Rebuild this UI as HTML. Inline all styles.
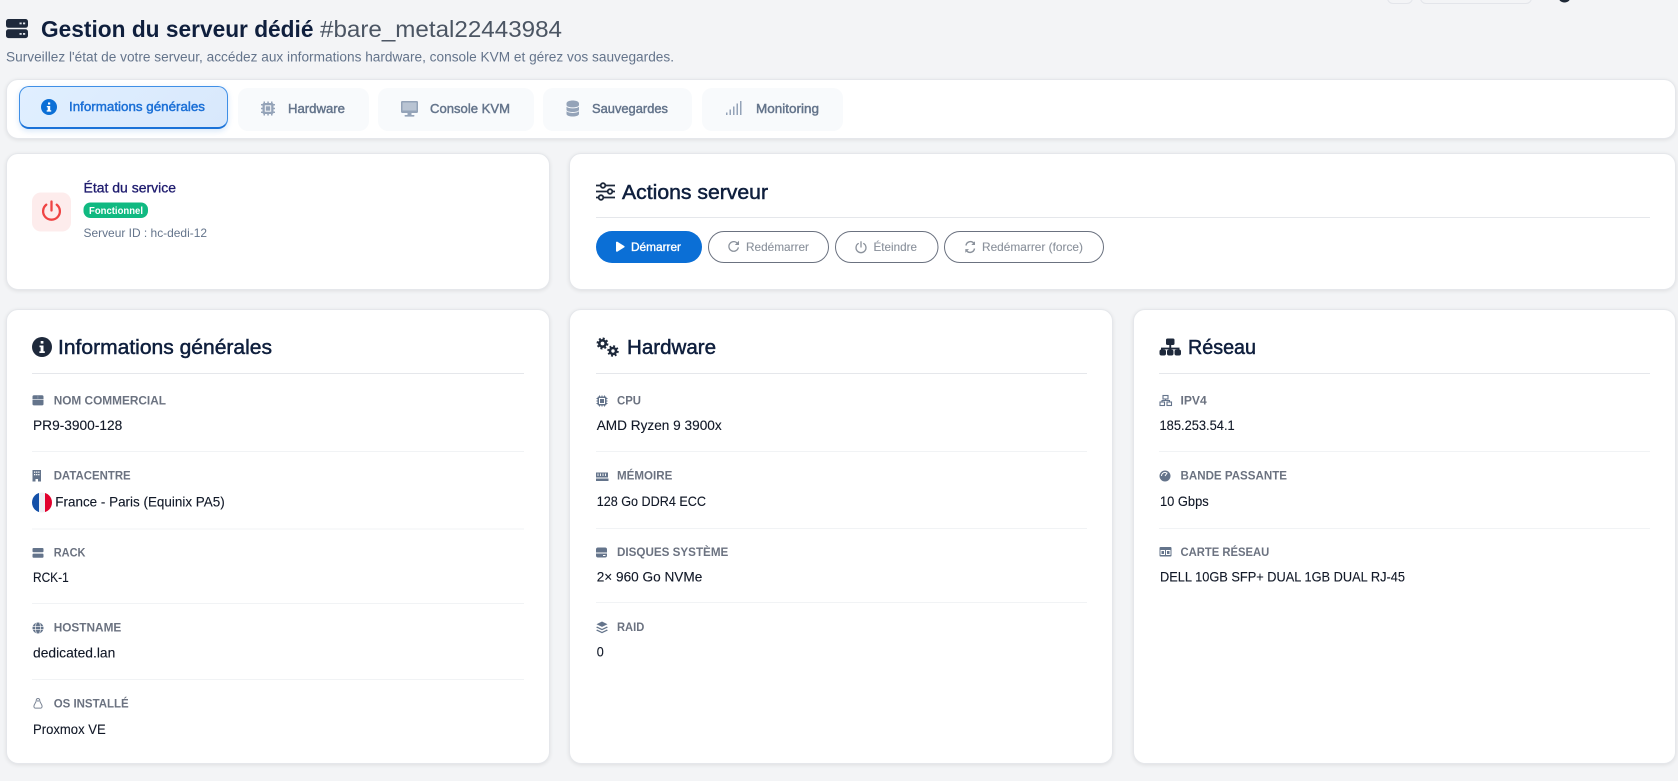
<!DOCTYPE html>
<html lang="fr">
<head>
<meta charset="utf-8">
<title>Gestion du serveur dédié</title>
<style>
html,body{margin:0;padding:0;width:1678px;height:781px;overflow:hidden;background:#f3f4f6;font-family:"Liberation Sans",sans-serif}
.c{position:absolute;background:#fff;border:1px solid #e5e7eb;border-radius:12px;box-shadow:0 1px 4px rgba(0,0,0,.09);box-sizing:border-box}
.t{position:absolute;box-sizing:border-box;background:#f8fafc;border-radius:10px;top:88px;height:43px}
svg{position:absolute;left:0;top:0}
text{font-family:"Liberation Sans",sans-serif}
.h{font-size:20.5px;fill:#0f1f3d;stroke:#0f1f3d;stroke-width:.5}
.l{font-size:12px;fill:#6b7280;font-weight:bold}
.v{font-size:14px;fill:#111827;stroke:#111827;stroke-width:.12}
.tb{font-size:13px;fill:#64748b;stroke:#64748b;stroke-width:.45}
.b{font-size:12px;fill:#8b929c;stroke:#8b929c;stroke-width:.12}
</style>
</head>
<body>
<div class="t" style="left:1387px;top:-20px;width:26px;height:24px;background:#f3f4f6;border:1px solid #e3e5ea;border-radius:6px"></div>
<div class="t" style="left:1420px;top:-20px;width:112px;height:24px;background:#f3f4f6;border:1px solid #e3e5ea;border-radius:6px"></div>
<div class="c" style="left:6px;top:78.500px;width:1670px;height:60.500px"></div>
<div class="t" style="left:19px;top:86px;width:209px;height:42.500px;background:linear-gradient(135deg,#e0efff,#d8e8fc);border:1px solid #3f8fe6;border-bottom:2.500px solid #1a72d8;border-radius:10px;box-shadow:0 2px 6px rgba(26,114,216,.18)"></div>
<div class="t" style="left:238px;width:131px"></div>
<div class="t" style="left:378px;width:156px"></div>
<div class="t" style="left:543px;width:149px"></div>
<div class="t" style="left:702px;width:141px"></div>
<div class="c" style="left:6px;top:153px;width:544px;height:136.500px"></div>
<div class="c" style="left:569px;top:153px;width:1107px;height:136.500px"></div>
<div class="c" style="left:6px;top:309px;width:544px;height:455px"></div>
<div class="c" style="left:569px;top:309px;width:544px;height:455px"></div>
<div class="c" style="left:1133px;top:309px;width:543px;height:455px"></div>

<svg width="1678" height="781" viewBox="0 0 1678 781" xmlns="http://www.w3.org/2000/svg">
<!-- top clipped avatar -->
<circle cx="1564.500" cy="-4" r="6.500" fill="#1f2937"/>

<!-- header -->
<rect x="6" y="19" width="22" height="8.800" rx="2.500" fill="#1e293b"/>
<rect x="6" y="29.300" width="22" height="8.800" rx="2.500" fill="#1e293b"/>
<g fill="#dfe3ea"><rect x="19.500" y="22.500" width="2.200" height="1.800"/><rect x="23" y="22.500" width="2.200" height="1.800"/><rect x="19.500" y="33" width="2.200" height="1.800"/><rect x="23" y="33" width="2.200" height="1.800"/></g>
<text x="41" y="37" font-size="23" font-weight="bold" fill="#0f1f3d" textLength="272.500" lengthAdjust="spacingAndGlyphs">Gestion du serveur dédié</text>
<text x="320" y="37" font-size="23" fill="#4b5563" textLength="242" lengthAdjust="spacingAndGlyphs">#bare_metal22443984</text>
<text x="6" y="61.500" font-size="13.500" fill="#64748b" textLength="668" lengthAdjust="spacingAndGlyphs">Surveillez l'état de votre serveur, accédez aux informations hardware, console KVM et gérez vos sauvegardes.</text>

<!-- tabs -->
<circle cx="49" cy="107" r="8" fill="#0b6fd6"/>
<rect x="48" y="102.500" width="2.200" height="2" fill="#fff"/><path d="M46.800 106h3.400v4.300h1v1.300h-4.500v-1.300h1v-3h-.9z" fill="#fff"/>
<text x="69" y="111" class="tb" style="fill:#1a6fd6;stroke:#1a6fd6" textLength="136" lengthAdjust="spacingAndGlyphs">Informations générales</text>

<g fill="#94a3b8"><rect x="262.500" y="103" width="11" height="11" rx="1.500"/><path d="M263.500 101.500h1.500v14h-1.500zM267.300 101.500h1.500v14h-1.500zM271 101.500h1.500v14H271zM261 104h14v1.500h-14zM261 107.800h14v1.500h-14zM261 111.500h14v1.500h-14z"/></g>
<rect x="264.800" y="105.300" width="6.400" height="6.400" fill="#f8fafc"/><rect x="265.800" y="106.300" width="4.400" height="4.400" fill="#94a3b8"/>
<text x="288" y="113" class="tb" textLength="57" lengthAdjust="spacingAndGlyphs">Hardware</text>

<rect x="401" y="101" width="17" height="12" rx="1.200" fill="#94a3b8"/><rect x="402.500" y="102.500" width="14" height="8" fill="#b9c4d3"/><rect x="407.500" y="113" width="4" height="2.500" fill="#94a3b8"/><rect x="404.500" y="115" width="10" height="1.600" rx=".8" fill="#94a3b8"/>
<text x="430" y="113" class="tb" textLength="80" lengthAdjust="spacingAndGlyphs">Console KVM</text>

<path d="M566.500 103.500c0-4 12.500-4 12.500 0v1.500c0 3.200-12.500 3.200-12.500 0zM566.500 106.700c2.500 2.200 10 2.200 12.500 0v3c0 3-12.500 3-12.500 0zM566.500 111.300c2.500 2.200 10 2.200 12.500 0v2.600c0 3.500-12.500 3.500-12.500 0z" fill="#94a3b8"/>
<text x="592" y="113" class="tb" textLength="76" lengthAdjust="spacingAndGlyphs">Sauvegardes</text>

<g fill="#94a3b8"><rect x="726" y="112.500" width="1.500" height="2.500"/><rect x="729.500" y="109.500" width="1.500" height="5.500"/><rect x="733" y="106.500" width="1.500" height="8.500"/><rect x="736.500" y="103.500" width="1.500" height="11.500"/><rect x="740" y="101" width="1.500" height="14"/></g>
<text x="756" y="113" class="tb" textLength="63" lengthAdjust="spacingAndGlyphs">Monitoring</text>

<!-- status card -->
<rect x="32" y="192.500" width="39" height="39" rx="9" fill="#fdecec"/>
<path d="M46.300 204.700a8.400 8.400 0 1 0 10.400 0" fill="none" stroke="#ef4444" stroke-width="2.300" stroke-linecap="round"/>
<path d="M51.500 201.500v9" fill="none" stroke="#ef4444" stroke-width="2.300" stroke-linecap="round"/>
<text x="83.500" y="192.500" font-size="13.500" fill="#1e1b6e" stroke="#1e1b6e" stroke-width=".3" textLength="92.500" lengthAdjust="spacingAndGlyphs">État du service</text>
<rect x="83.500" y="202.500" width="64.500" height="15.500" rx="7" fill="#10b981"/>
<text x="89" y="214" font-size="10" font-weight="bold" fill="#fff" textLength="54" lengthAdjust="spacingAndGlyphs">Fonctionnel</text>
<text x="83.500" y="237" font-size="12" fill="#64748b" textLength="123.500" lengthAdjust="spacingAndGlyphs">Serveur ID : hc-dedi-12</text>

<!-- actions card -->
<g stroke="#1e293b" stroke-width="1.800" fill="#fff">
<path d="M596 185.500h19M596 191.500h19M596 197.500h19" fill="none"/>
<circle cx="603" cy="185.500" r="2.300"/><circle cx="610" cy="191.500" r="2.300"/><circle cx="601" cy="197.500" r="2.300"/>
</g>
<text x="622" y="199" class="h" textLength="146" lengthAdjust="spacingAndGlyphs">Actions serveur</text>
<rect x="596" y="217" width="1054" height="1" fill="#e5e7eb"/>
<rect x="596" y="231" width="106" height="32" rx="16" fill="#0b6fd6"/>
<path d="M616 242.500c0-.7.800-1.100 1.400-.7l6.800 4.200c.6.400.6 1.100 0 1.400l-6.800 4.200c-.6.400-1.400 0-1.400-.7z" fill="#fff"/>
<text x="631" y="251" font-size="12" fill="#fff" stroke="#fff" stroke-width=".35" textLength="50" lengthAdjust="spacingAndGlyphs">Démarrer</text>

<rect x="708.500" y="231.500" width="120" height="31" rx="15.500" fill="#fff" stroke="#6b7280"/>
<path d="M737.700 243.800a4.800 4.800 0 1 0 .7 3.600" fill="none" stroke="#8b929c" stroke-width="1.300"/><path d="M739 240.800v4.200h-4.200z" fill="#8b929c"/>
<text x="746" y="251" class="b" textLength="63" lengthAdjust="spacingAndGlyphs">Redémarrer</text>

<rect x="835.500" y="231.500" width="102.500" height="31" rx="15.500" fill="#fff" stroke="#6b7280"/>
<path d="M858.300 243.500a5 5 0 1 0 5.400 0M861 241.800v5.200" fill="none" stroke="#8b929c" stroke-width="1.300" stroke-linecap="round"/>
<text x="873.500" y="251" class="b" textLength="43.500" lengthAdjust="spacingAndGlyphs">Éteindre</text>

<rect x="944.500" y="231.500" width="159" height="31" rx="15.500" fill="#fff" stroke="#6b7280"/>
<path d="M966 245.500a4.500 4.500 0 0 1 7.800-2.400M974.500 248.500a4.500 4.500 0 0 1-7.800 2.400" fill="none" stroke="#8b929c" stroke-width="1.400"/>
<path d="M975 241.300v3.700h-3.700zM965.300 252.800v-3.700h3.700z" fill="#8b929c"/>
<text x="982" y="251" class="b" textLength="101" lengthAdjust="spacingAndGlyphs">Redémarrer (force)</text>

<!-- Informations générales -->
<circle cx="42" cy="347" r="10" fill="#1e293b"/>
<rect x="40.700" y="341" width="2.700" height="2.600" fill="#fff"/><path d="M39.500 345.500h4v5.800h1.300v1.700h-5.400v-1.700h1.200v-4.100h-1.100z" fill="#fff"/>
<text x="58" y="354" class="h" textLength="214" lengthAdjust="spacingAndGlyphs">Informations générales</text>
<rect x="32" y="373" width="492" height="1" fill="#e5e7eb"/>

<path d="M32.500 399v-2.300a1.500 1.500 0 0 1 1.500-1.500h8a1.500 1.500 0 0 1 1.500 1.500v2.300zM32.500 399.600h11v4.400a1.400 1.400 0 0 1-1.400 1.400h-8.200a1.400 1.400 0 0 1-1.400-1.400z" fill="#64748b"/>
<rect x="37.500" y="395.200" width=".8" height="3.500" fill="#8a97a8"/>
<text x="53.700" y="404.600" class="l" textLength="112.300" lengthAdjust="spacingAndGlyphs">NOM COMMERCIAL</text>
<text x="33" y="430" class="v" textLength="89.300" lengthAdjust="spacingAndGlyphs">PR9-3900-128</text>
<rect x="32" y="451" width="492" height="1" fill="#f1f3f5"/>

<path d="M32.500 470h8.500v11.500h-3v-2.500h-2.500v2.500h-3z" fill="#64748b"/>
<g fill="#fff"><rect x="34" y="471.500" width="1.300" height="1.300"/><rect x="36.100" y="471.500" width="1.300" height="1.300"/><rect x="38.200" y="471.500" width="1.300" height="1.300"/><rect x="34" y="474" width="1.300" height="1.300"/><rect x="36.100" y="474" width="1.300" height="1.300"/><rect x="38.200" y="474" width="1.300" height="1.300"/></g>
<text x="53.700" y="479.600" class="l" textLength="77" lengthAdjust="spacingAndGlyphs">DATACENTRE</text>
<clipPath id="f"><circle cx="42" cy="502.500" r="10"/></clipPath>
<g clip-path="url(#f)"><rect x="32" y="492" width="7" height="21" fill="#1450a8"/><rect x="39" y="492" width="6" height="21" fill="#eef0f4"/><rect x="45" y="492" width="7" height="21" fill="#e1002d"/></g>
<text x="55.300" y="506.500" class="v" textLength="169.400" lengthAdjust="spacingAndGlyphs">France - Paris (Equinix PA5)</text>
<rect x="32" y="528.500" width="492" height="1" fill="#f1f3f5"/>

<rect x="32.500" y="548" width="11" height="4.200" rx="1" fill="#64748b"/><rect x="32.500" y="553.600" width="11" height="4.200" rx="1" fill="#64748b"/>
<text x="53.700" y="556.600" class="l" textLength="31.800" lengthAdjust="spacingAndGlyphs">RACK</text>
<text x="33" y="582" class="v" textLength="35.700" lengthAdjust="spacingAndGlyphs">RCK-1</text>
<rect x="32" y="603" width="492" height="1" fill="#f1f3f5"/>

<circle cx="38" cy="628" r="5.500" fill="#64748b"/>
<path d="M32.500 626.300h11M32.500 629.700h11M36.300 622.600c-1 3.500-1 7.300 0 10.800M39.700 622.600c1 3.500 1 7.300 0 10.800" fill="none" stroke="#fff" stroke-width=".7"/>
<text x="53.700" y="631.600" class="l" textLength="67.600" lengthAdjust="spacingAndGlyphs">HOSTNAME</text>
<text x="33" y="657.500" class="v" textLength="82.300" lengthAdjust="spacingAndGlyphs">dedicated.lan</text>
<rect x="32" y="679" width="492" height="1" fill="#f1f3f5"/>

<path d="M38 698.500c-1.300 0-1.800 1-1.800 2.400 0 1.500-2.300 3.300-2.300 5.500 0 1.200 1 2 1.700 1.700h4.800c.7.300 1.700-.5 1.700-1.700 0-2.200-2.300-4-2.300-5.500 0-1.400-.5-2.400-1.800-2.400z" fill="none" stroke="#7a8494" stroke-width="1"/>
<path d="M36.800 700.500h2.400l-1.200 1.500z" fill="#64748b"/>
<text x="53.700" y="707.600" class="l" textLength="75" lengthAdjust="spacingAndGlyphs">OS INSTALLÉ</text>
<text x="33" y="734" class="v" textLength="72.700" lengthAdjust="spacingAndGlyphs">Proxmox VE</text>

<!-- Hardware -->
<circle cx="602.500" cy="343.500" r="3.200" fill="none" stroke="#1e293b" stroke-width="2.600"/>
<circle cx="602.500" cy="343.500" r="5" fill="none" stroke="#1e293b" stroke-width="1.900" stroke-dasharray="2 1.930"/>
<circle cx="613" cy="351" r="3" fill="none" stroke="#1e293b" stroke-width="2.600"/>
<circle cx="613" cy="351" r="4.800" fill="none" stroke="#1e293b" stroke-width="1.900" stroke-dasharray="1.900 1.870"/>
<text x="627" y="354" class="h" textLength="89" lengthAdjust="spacingAndGlyphs">Hardware</text>
<rect x="596" y="373" width="491" height="1" fill="#e5e7eb"/>

<g fill="#64748b"><rect x="597.500" y="396.500" width="9" height="9" rx="1.200"/><path d="M599 395.500h1v11h-1zM601.500 395.500h1v11h-1zM604 395.500h1v11h-1zM596.500 398h11v1h-11zM596.500 400.500h11v1h-11zM596.500 403h11v1h-11z"/></g>
<rect x="599" y="398" width="6" height="6" fill="#fff"/><rect x="600" y="399" width="4" height="4" fill="#64748b"/>
<text x="617" y="404.600" class="l" textLength="24" lengthAdjust="spacingAndGlyphs">CPU</text>
<text x="596.700" y="430" class="v" textLength="125" lengthAdjust="spacingAndGlyphs">AMD Ryzen 9 3900x</text>
<rect x="596" y="451" width="491" height="1" fill="#f1f3f5"/>

<rect x="596" y="472.500" width="12" height="5" fill="#64748b"/><path d="M598 473.500v2.500M600.500 473.500v2.500M603 473.500v2.500M605.500 473.500v2.500" stroke="#fff" stroke-width=".9"/><path d="M596 478.500h12.500v2.500h-12.500z" fill="#64748b"/>
<text x="617" y="479.600" class="l" textLength="55.300" lengthAdjust="spacingAndGlyphs">MÉMOIRE</text>
<text x="596.700" y="506" class="v" textLength="109.300" lengthAdjust="spacingAndGlyphs">128 Go DDR4 ECC</text>
<rect x="596" y="528" width="491" height="1" fill="#f1f3f5"/>

<path d="M596 549.500a2 2 0 0 1 2-2h7a2 2 0 0 1 2 2v3h-11zM596 553.500h11v2a2 2 0 0 1-2 2h-7a2 2 0 0 1-2-2z" fill="#64748b"/>
<rect x="603" y="555" width="2.500" height="1" fill="#fff"/>
<text x="617" y="555.800" class="l" textLength="111.300" lengthAdjust="spacingAndGlyphs">DISQUES SYSTÈME</text>
<text x="596.700" y="581.300" class="v" textLength="105.600" lengthAdjust="spacingAndGlyphs">2× 960 Go NVMe</text>
<rect x="596" y="602" width="491" height="1" fill="#f1f3f5"/>

<path d="M602 621.500l5.500 2.700-5.500 2.700-5.500-2.700zM597 626.500l5 2.400 5-2.400 .8 1-5.800 2.800-5.800-2.800zM597 629.500l5 2.400 5-2.400 .8 1-5.800 2.800-5.800-2.800z" fill="#64748b"/>
<text x="617" y="630.800" class="l" textLength="27.300" lengthAdjust="spacingAndGlyphs">RAID</text>
<text x="596.700" y="656.300" class="v" textLength="7" lengthAdjust="spacingAndGlyphs">0</text>

<!-- Réseau -->
<g fill="#1e293b">
<rect x="1166" y="338.500" width="8.500" height="6.500" rx="1.500"/>
<path d="M1169.300 345h1.900v2.600h8.300v3h-1.900v-1.200h-6.400v1.200h-1.900v-1.200h-6.400v1.200h-1.900v-3h8.300z"/>
<rect x="1159.500" y="349.500" width="6.500" height="6" rx="2"/><rect x="1167" y="349.500" width="6.500" height="6" rx="2"/><rect x="1174.500" y="349.500" width="6.500" height="6" rx="2"/>
</g>
<text x="1188" y="354" class="h" textLength="68" lengthAdjust="spacingAndGlyphs">Réseau</text>
<rect x="1159" y="373" width="491" height="1" fill="#e5e7eb"/>

<g fill="none" stroke="#64748b" stroke-width="1.100"><rect x="1163" y="395.500" width="5" height="3.500"/><rect x="1160" y="402" width="4.500" height="3.500"/><rect x="1167" y="402" width="4.500" height="3.500"/><path d="M1165.500 399v1.500M1162 402v-1.500h7.500v1.500"/></g>
<text x="1180.500" y="404.600" class="l" textLength="26.200" lengthAdjust="spacingAndGlyphs">IPV4</text>
<text x="1159.500" y="430" class="v" textLength="75.200" lengthAdjust="spacingAndGlyphs">185.253.54.1</text>
<rect x="1159" y="451" width="491" height="1" fill="#f1f3f5"/>

<circle cx="1165" cy="476" r="5.500" fill="#64748b"/><path d="M1165 476l2.300-3.300M1161.500 476a3.500 3.500 0 0 1 5-3.200" fill="none" stroke="#fff" stroke-width="1"/>
<text x="1180.500" y="479.600" class="l" textLength="106.500" lengthAdjust="spacingAndGlyphs">BANDE PASSANTE</text>
<text x="1160" y="506" class="v" textLength="48.700" lengthAdjust="spacingAndGlyphs">10 Gbps</text>
<rect x="1159" y="528" width="491" height="1" fill="#f1f3f5"/>

<rect x="1159.500" y="547" width="12" height="9.500" rx="1" fill="#64748b"/><rect x="1160.500" y="550" width="4.500" height="5" fill="#fff"/><rect x="1166" y="550" width="4.500" height="5" fill="#fff"/><rect x="1161.500" y="551" width="2.500" height="3" fill="#64748b"/><rect x="1167" y="551" width="2.500" height="3" fill="#64748b"/>
<text x="1180.500" y="556" class="l" textLength="88.800" lengthAdjust="spacingAndGlyphs">CARTE RÉSEAU</text>
<text x="1160" y="581.500" class="v" textLength="245" lengthAdjust="spacingAndGlyphs">DELL 10GB SFP+ DUAL 1GB DUAL RJ-45</text>
</svg>
</body>
</html>
